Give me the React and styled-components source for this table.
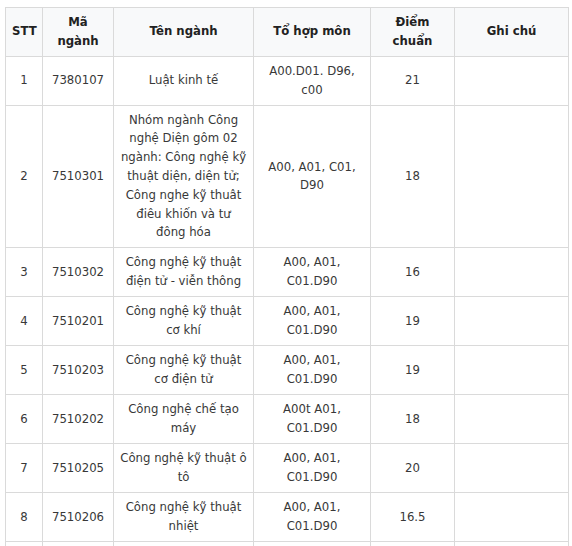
import React from 'react';
import styled, { createGlobalStyle } from 'styled-components';

const GlobalStyle = createGlobalStyle`
	html, body {
		margin: 0;
		padding: 0;
		background: #fff;
	}
	body {
		font-family: 'DejaVu Sans Condensed', 'DejaVu Sans', 'Liberation Sans', sans-serif;
		font-stretch: condensed;
		color: #383838;
	}
`;

const Wrapper = styled.div`
	padding: 7px 4px 0 5px;
`;

const Table = styled.table`
	border-collapse: collapse;
	table-layout: fixed;
	width: 563px;
	font-size: 13px;
	line-height: 18.8px;
`;

const Head = styled.th`
	background: #f8f9fa;
	border: 1px solid #dadada;
	padding: 5px 6px;
	font-weight: bold;
	color: #222;
	text-align: center;
	vertical-align: middle;
	height: 37px;
`;

const Cell = styled.td`
	border: 1px solid #dadada;
	padding: 5px 6px;
	text-align: center;
	vertical-align: middle;
	height: 38px;
`;

const COLS = [37, 71, 140, 117, 84, 114];

const ROWS = [
	['1', '7380107', 'Luật kinh tế', 'A00.D01. D96, c00', '21'],
	[
		'2',
		'7510301',
		'Nhóm ngành Công nghệ Diện gôm 02 ngành: Công nghệ kỹ thuật diện, diện tử; Công nghe kỹ thuât điêu khiốn và tư đông hóa',
		'A00, A01, C01, D90',
		'18',
	],
	['3', '7510302', 'Công nghệ kỹ thuật điện tử - viễn thông', 'A00, A01, C01.D90', '16'],
	['4', '7510201', 'Công nghệ kỹ thuật cơ khí', 'A00, A01, C01.D90', '19'],
	['5', '7510203', 'Công nghệ kỹ thuật cơ điện tử', 'A00, A01, C01.D90', '19'],
	['6', '7510202', 'Công nghệ chế tạo máy', 'A00t A01, C01.D90', '18'],
	['7', '7510205', 'Công nghệ kỹ thuật ô tô', 'A00, A01, C01.D90', '20'],
	['8', '7510206', 'Công nghệ kỹ thuật nhiệt', 'A00, A01, C01.D90', '16.5'],
	['', '', '', '', ''],
];

const App = () => (
	<Wrapper>
		<GlobalStyle />
		<Table>
			<colgroup>
				{COLS.map((w, i) => (
					<col key={i} style={{ width: w }} />
				))}
			</colgroup>
			<thead>
				<tr>
					<Head>STT</Head>
					<Head>Mã ngành</Head>
					<Head>Tên ngành</Head>
					<Head>Tổ hợp môn</Head>
					<Head>Điểm chuẩn</Head>
					<Head>Ghi chú</Head>
				</tr>
			</thead>
			<tbody>
				{ROWS.map((row, r) => (
					<tr key={r}>
						{row.map((text, i) => (
							<Cell key={i}>{text}</Cell>
						))}
						<Cell />
					</tr>
				))}
			</tbody>
		</Table>
	</Wrapper>
);

export default App;
